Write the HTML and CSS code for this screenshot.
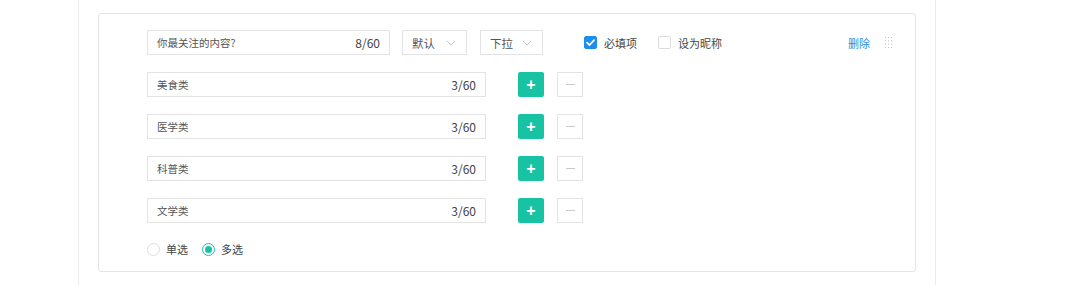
FILE: index.html
```html
<!DOCTYPE html>
<html lang="zh">
<head>
<meta charset="utf-8">
<link rel="stylesheet" href="styles.css">
</head>
<body>
<div class="panel">
  <div class="card">
    <div class="qrow">
      <div class="field qfield"><span class="ftext">你最关注的内容?</span><span class="count">8/60</span></div>
      <div class="select sel1"><span>默认</span><svg class="chev" viewBox="0 0 10 6" width="10" height="6"><path d="M1 1 L5 5 L9 1" fill="none" stroke="#c8c8c8" stroke-width="1"/></svg></div>
      <div class="select sel2"><span>下拉</span><svg class="chev" viewBox="0 0 10 6" width="10" height="6"><path d="M1 1 L5 5 L9 1" fill="none" stroke="#c8c8c8" stroke-width="1"/></svg></div>
      <label class="check first"><span class="box on"><svg viewBox="0 0 13 13" width="13" height="13"><path d="M3 6.6 L5.6 9 L10 4.2" fill="none" stroke="#fff" stroke-width="1.8" stroke-linecap="round" stroke-linejoin="round"/></svg></span><span class="clabel">必填项</span></label>
      <label class="check second"><span class="box"></span><span class="clabel">设为昵称</span></label>
      <span class="del">删除</span>
      <svg class="drag" viewBox="0 0 7 11" width="7" height="11">
        <g fill="#bdbdbd">
          <rect x="0" y="0" width="1" height="1"/><rect x="3" y="0" width="1" height="1"/><rect x="6" y="0" width="1" height="1"/>
          <rect x="0" y="3.3" width="1" height="1"/><rect x="3" y="3.3" width="1" height="1"/><rect x="6" y="3.3" width="1" height="1"/>
          <rect x="0" y="6.6" width="1" height="1"/><rect x="3" y="6.6" width="1" height="1"/><rect x="6" y="6.6" width="1" height="1"/>
          <rect x="0" y="10" width="1" height="1"/><rect x="3" y="10" width="1" height="1"/><rect x="6" y="10" width="1" height="1"/>
        </g>
      </svg>
    </div>
    <div class="orow">
      <div class="field ofield"><span class="ftext">美食类</span><span class="count">3/60</span></div>
      <button class="btn add">+</button><button class="btn sub"><span class="dash"></span></button>
    </div>
    <div class="orow">
      <div class="field ofield"><span class="ftext">医学类</span><span class="count">3/60</span></div>
      <button class="btn add">+</button><button class="btn sub"><span class="dash"></span></button>
    </div>
    <div class="orow">
      <div class="field ofield"><span class="ftext">科普类</span><span class="count">3/60</span></div>
      <button class="btn add">+</button><button class="btn sub"><span class="dash"></span></button>
    </div>
    <div class="orow">
      <div class="field ofield"><span class="ftext">文学类</span><span class="count">3/60</span></div>
      <button class="btn add">+</button><button class="btn sub"><span class="dash"></span></button>
    </div>
    <div class="rrow">
      <label class="radio"><span class="circle"></span><span class="rlabel">单选</span></label>
      <label class="radio"><span class="circle on"></span><span class="rlabel">多选</span></label>
    </div>
  </div>
</div>
</body>
</html>
```
FILE: styles.css
```css
html, body {
  margin: 0;
  padding: 0;
  background: #ffffff;
}
body {
  width: 1080px;
  height: 285px;
  overflow: hidden;
  font-family: "Noto Sans CJK SC", "Noto Sans", sans-serif;
  font-size: 11px;
  color: #555555;
}
.panel {
  margin-left: 78px;
  width: 837px;
  height: 285px;
  border-left: 1px solid #ececec;
  border-right: 1px solid #ececec;
  padding: 13px 0 0 19px;
  box-sizing: content-box;
}
.card {
  width: 818px;
  border: 1px solid #e4e4e4;
  border-radius: 3px;
  padding: 16px 0 15px 48px;
  box-sizing: border-box;
}
.qrow {
  display: flex;
  align-items: center;
  height: 25px;
}
.field {
  display: flex;
  align-items: center;
  justify-content: space-between;
  height: 25px;
  box-sizing: border-box;
  border: 1px solid #e3e3e3;
  padding: 0 9px 0 9px;
}
.ftext {
  font-size: 10.5px;
  color: #555;
}
.count {
  font-size: 12px;
  color: #444;
}
.qfield { width: 243px; }
.select {
  display: flex;
  align-items: center;
  justify-content: space-between;
  height: 25px;
  box-sizing: border-box;
  border: 1px solid #e3e3e3;
  padding: 0 10px 0 9px;
  font-size: 11.5px;
  color: #555;
}
.sel1 { width: 65px; margin-left: 12px; }
.sel2 { width: 63px; margin-left: 13px; }
.check {
  display: flex;
  align-items: center;
}
.check.first { margin-left: 41px; }
.check.second { margin-left: 21px; }
.box {
  width: 13px;
  height: 13px;
  box-sizing: border-box;
  border: 1px solid #dcdcdc;
  border-radius: 2px;
  display: flex;
}
.box.on {
  background: #1a8ff0;
  border-color: #1a8ff0;
}
.box svg { margin: -1px; }
.clabel {
  margin-left: 7px;
  color: #444;
}
.del {
  margin-left: auto;
  color: #2b8ee0;
  font-size: 11px;
}
.drag {
  margin-left: 15px;
  margin-right: 23px;
}
.orow {
  display: flex;
  align-items: center;
  margin-top: 17px;
  height: 25px;
}
.ofield { width: 339px; }
.btn {
  width: 26px;
  height: 25px;
  padding: 0;
  box-sizing: border-box;
  display: flex;
  align-items: center;
  justify-content: center;
  font-family: "Liberation Sans", sans-serif;
  cursor: pointer;
}
.add {
  margin-left: 32px;
  background: #18c3a4;
  border: none;
  border-radius: 2px;
  color: #fff;
  font-size: 16px;
  font-weight: bold;
}
.sub {
  margin-left: 13px;
  background: #fff;
  border: 1px solid #e3e3e3;
}
.dash {
  width: 9px;
  height: 1px;
  background: #c9c9c9;
}
.rrow {
  display: flex;
  align-items: center;
  margin-top: 19px;
  height: 14px;
}
.radio {
  display: flex;
  align-items: center;
  margin-right: 14px;
}
.circle {
  width: 13px;
  height: 13px;
  box-sizing: border-box;
  border: 1px solid #dedede;
  border-radius: 50%;
  display: flex;
  align-items: center;
  justify-content: center;
}
.circle.on {
  border-color: #18c3a4;
}
.circle.on::after {
  content: "";
  width: 7px;
  height: 7px;
  border-radius: 50%;
  background: #18c3a4;
}
.rlabel {
  margin-left: 6px;
  color: #444;
}
```
